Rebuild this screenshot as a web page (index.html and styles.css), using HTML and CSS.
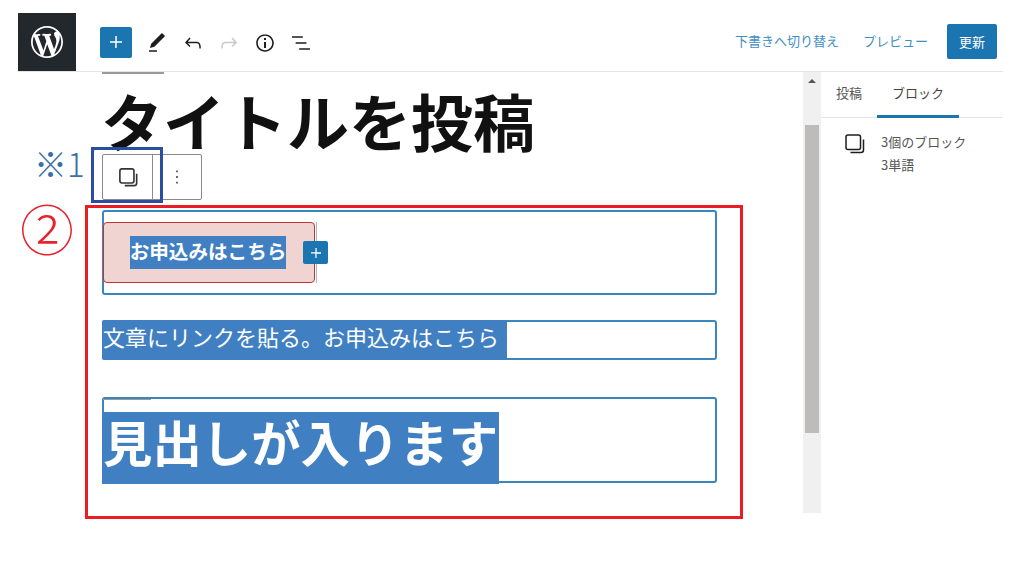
FILE: index.html
```html
<!DOCTYPE html>
<html lang="ja">
<head>
<meta charset="utf-8">
<title>タイトルを投稿</title>
<link rel="stylesheet" href="styles.css">
</head>
<body>
<div class="app">
  <header class="topbar">
    <div class="logo">
      <svg width="32" height="32" viewBox="0 0 20 20"><path fill="#fff" d="M20 10c0-5.51-4.49-10-10-10C4.48 0 0 4.49 0 10c0 5.52 4.48 10 10 10 5.51 0 10-4.48 10-10zM7.78 15.37L4.37 6.22c.55-.02 1.17-.08 1.17-.08.5-.06.44-1.13-.06-1.11 0 0-1.45.11-2.37.11-.18 0-.37 0-.58-.01C4.12 2.69 6.87 1.11 10 1.11c2.33 0 4.45.87 6.05 2.34-.68-.11-1.65.39-1.65 1.58 0 .74.45 1.36.9 2.1.35.61.55 1.36.55 2.46 0 1.49-1.4 5-1.4 5l-3.03-8.37c.54-.02.82-.17.82-.17.5-.05.44-1.25-.06-1.22 0 0-1.44.12-2.38.12-.87 0-2.33-.12-2.33-.12-.5-.03-.56 1.2-.06 1.22l.92.08 1.26 3.41zM17.41 10c.24-.64.74-1.87.43-4.25.7 1.29 1.05 2.71 1.05 4.25 0 3.29-1.73 6.24-4.4 7.78.97-2.59 1.94-5.2 2.92-7.78zM6.1 18.09C3.12 16.65 1.11 13.53 1.11 10c0-1.3.23-2.48.72-3.59C3.25 10.3 4.67 14.2 6.1 18.09zm4.03-6.63l2.58 6.98c-.86.29-1.76.45-2.71.45-.79 0-1.57-.11-2.29-.33.81-2.38 1.62-4.74 2.42-7.1z"/></svg>
    </div>
    <div class="tools">
      <span class="add">
        <svg width="24" height="24" viewBox="0 0 24 24"><path fill="#fff" d="M18 11.2h-5.2V6h-1.5v5.2H6v1.5h5.2V18h1.5v-5.2H18z"/></svg>
      </span>
      <span class="tool">
        <svg width="24" height="24" viewBox="0 0 24 24"><path d="M20.1 5.1L16.9 2 6.2 12.7l-1.3 4.4 4.5-1.3L20.1 5.1zM4 20.8h8v-1.5H4v1.5z"/></svg>
      </span>
      <span class="tool">
        <svg width="24" height="24" viewBox="0 0 24 24"><path d="M18.3 11.7c-.6-.6-1.4-.9-2.3-.9H6.7l2.9-3.3-1.1-1-4.5 5L8.5 16l1-1-2.7-2.7H16c.5 0 .9.2 1.3.5 1 1 1 3.4 1 4.5v.3h1.5v-.2c0-1.5 0-4.3-1.5-5.7z"/></svg>
      </span>
      <span class="tool tool-off">
        <svg width="24" height="24" viewBox="0 0 24 24"><path d="M15.6 6.5l-1.1 1 2.9 3.3H8c-.9 0-1.7.3-2.3.9-1.4 1.5-1.4 4.2-1.4 5.6v.2h1.5v-.3c0-1.1 0-3.5 1-4.5.3-.3.7-.5 1.3-.5h9.2L14.5 15l1.1 1.1 4.6-4.6-4.6-5z"/></svg>
      </span>
      <span class="tool">
        <svg width="24" height="24" viewBox="0 0 24 24"><path d="M12 3.2c-4.8 0-8.8 3.9-8.8 8.8 0 4.8 3.9 8.8 8.8 8.8 4.8 0 8.8-3.9 8.8-8.8 0-4.8-4-8.8-8.8-8.8zm0 16c-4 0-7.2-3.3-7.2-7.2C4.8 8 8 4.8 12 4.8s7.2 3.3 7.2 7.2c0 4-3.2 7.2-7.2 7.2zM11 17h2v-6h-2v6zm0-8h2V7h-2v2z"/></svg>
      </span>
      <span class="tool">
        <svg width="24" height="24" viewBox="0 0 24 24"><path d="M13.8 5.2H3v1.5h10.8V5.2zm-3.6 12v1.5H21v-1.5H10.2zm7.2-6H6.6v1.5h10.8v-1.5z"/></svg>
      </span>
    </div>
    <div class="actions">
      <a class="link">下書きへ切り替え</a>
      <a class="link">プレビュー</a>
      <span class="update">更新</span>
    </div>
  </header>

  <div class="workspace">
    <main class="editor">
      <div class="tab-mark"></div>
      <h1 class="post-title">タイトルを投稿</h1>
      <div class="block-toolbar">
        <span class="bt-stack">
          <svg width="26" height="26" viewBox="0 0 24 24" fill="none" stroke="#333" stroke-width="1.5"><rect x="4.5" y="4.5" width="13" height="13" rx="2"/><path d="M20 9v8.5a2.5 2.5 0 0 1-2.5 2.5H9"/></svg>
        </span>
        <span class="bt-more">
          <svg width="24" height="24" viewBox="0 0 24 24"><path fill="#444" d="M12.8 18.5h-1.6v-1.8h1.6v1.8zm0-5.6h-1.6v-1.8h1.6v1.8zm0-5.6h-1.6V5.5h1.6v1.8z"/></svg>
        </span>
      </div>

      <section class="block block-button">
        <div class="wp-button"><span class="sel sel-button">お申込みはこちら</span></div>
        <span class="caret"></span>
        <span class="inserter">
          <svg width="20" height="20" viewBox="0 0 24 24"><path fill="#fff" d="M18 11.2h-5.2V6h-1.5v5.2H6v1.5h5.2V18h1.5v-5.2H18z"/></svg>
        </span>
      </section>

      <section class="block block-para">
        <span class="sel sel-para">文章にリンクを貼る。お申込みはこちら</span>
      </section>

      <section class="block block-heading">
        <div class="heading-mark"></div>
        <span class="sel sel-heading">見出しが入ります</span>
      </section>
    </main>

    <div class="scrollbar">
      <div class="scroll-up"></div>
      <div class="scroll-thumb"></div>
    </div>

    <aside class="sidebar">
      <nav class="tabs">
        <span class="tab">投稿</span>
        <span class="tab tab-active">ブロック</span>
      </nav>
      <div class="summary">
        <svg class="summary-icon" width="24" height="24" viewBox="0 0 24 24" fill="none" stroke="#1e1e1e" stroke-width="1.5"><rect x="3" y="3" width="14.5" height="14.5" rx="2"/><path d="M20.5 7.5v10.5a2.5 2.5 0 0 1-2.5 2.5H7.5"/></svg>
        <div class="summary-text">
          <p>3個のブロック</p>
          <p>3単語</p>
        </div>
      </div>
    </aside>
  </div>

  <div class="note-mark">※1</div>
  <div class="note-box"></div>
  <div class="num-mark">②</div>
  <div class="red-box"></div>
</div>
</body>
</html>
```

FILE: styles.css
```css
* { box-sizing: border-box; }
html, body { margin: 0; padding: 0; background: #fff; }
body {
  font-family: "Noto Sans CJK JP", "Noto Sans", sans-serif;
  color: #1e1e1e;
  overflow: hidden;
}
.app { position: relative; width: 1024px; height: 563px; padding: 13px 21px 0 18px; }

.topbar { display: flex; align-items: stretch; height: 59px; border-bottom: 1px solid #e4e4e4; }
.logo { width: 58px; height: 58px; background: #23282d; display: flex; align-items: center; justify-content: center; }
.tools { display: flex; align-items: center; padding-left: 24px; padding-top: 1px; }
.add { width: 32px; height: 31px; margin-top: -1px; background: #1a75b0; border-radius: 2px; display: flex; align-items: center; justify-content: center; margin-right: 7px; }
.tool { width: 36px; height: 36px; display: flex; align-items: center; justify-content: center; }
.tool svg { fill: #1e1e1e; }
.tool-off svg { fill: #c9c9c9; }
.actions { margin-left: auto; display: flex; align-items: center; gap: 24px; padding: 0 6px 2px 0; }
.link { font-size: 13px; color: #3f8fc2; line-height: 20px; }
.update { width: 50px; height: 35px; margin-left: -5px; background: #1a75b0; color: #fff; font-size: 13px; border-radius: 2px; display: flex; align-items: center; justify-content: center; }

.workspace { display: flex; height: 441px; }
.editor { width: 785px; padding-left: 84px; }
.tab-mark { width: 62px; height: 2px; background: #9a9a9a; }
.post-title { margin: 0 0 0 -1px; height: 80px; font-size: 62px; line-height: 93px; font-weight: 700; color: #111; white-space: nowrap; }
.block-toolbar { display: flex; width: 100px; height: 46px; border: 1px solid #8a8a8a; border-radius: 2px; background: #fff; }
.bt-stack { width: 50px; border-right: 1px solid #8a8a8a; display: flex; align-items: center; justify-content: center; }
.bt-more { flex: 1; display: flex; align-items: center; justify-content: center; }

.block { position: relative; width: 615px; border: 2px solid #3a86bd; border-radius: 3px; }
.sel { background: #4080c2; color: #fff; }

.block-button { height: 85px; margin-top: 10px; padding-top: 10px; }
.wp-button { width: 212px; height: 61px; margin-left: -1px; background: #f0d4d2; border: 1.5px solid #c0352f; border-radius: 4px; display: flex; align-items: center; justify-content: center; padding-right: 2px; }
.sel-button { font-size: 19.6px; font-weight: 700; line-height: 29px; height: 33px; white-space: nowrap; }
.caret { position: absolute; left: 212px; top: 10px; width: 1px; height: 61px; background: #9fbfd8; }
.inserter { position: absolute; left: 199px; top: 29px; width: 25px; height: 23px; background: #1a75b0; border-radius: 2px; display: flex; align-items: center; justify-content: center; }

.block-para { height: 40px; margin-top: 25px; }
.sel-para { display: block; width: 405px; height: 40px; margin: -2px 0 0 -2px; padding-left: 1px; font-size: 22px; line-height: 33px; white-space: nowrap; border-radius: 2px; }

.block-heading { height: 86px; margin-top: 37px; }
.heading-mark { width: 48px; height: 1px; background: #9a9a9a; margin-left: -1px; }
.sel-heading { display: block; width: 397px; height: 72px; margin: 12px 0 0 -2px; padding-left: 1px; font-size: 49.4px; font-weight: 700; line-height: 58px; white-space: nowrap; }

.scrollbar { width: 18px; background: #f0f0f0; padding: 0 2px; position: relative; }
.scroll-up { width: 0; height: 0; margin: 7px auto 0; border: 4px solid transparent; border-top: 0; border-bottom: 4px solid #555; }
.scroll-thumb { height: 308px; margin-top: 42px; background: #bdbcba; }

.sidebar { width: 182px; }
.tabs { display: flex; height: 46px; border-bottom: 1px solid #e4e4e4; padding-left: 15px; gap: 30px; }
.tab { position: relative; font-size: 13px; line-height: 42px; color: #555; white-space: nowrap; }
.tab-active::after { content: ""; position: absolute; left: -15px; right: -15px; bottom: -1px; height: 3px; background: #1a75b0; }
.tab-active { color: #444; }
.summary { display: flex; padding: 14px 0 0 22px; }
.summary-icon { flex: none; margin-right: 14px; }
.summary-text { font-size: 13px; color: #555; line-height: 23px; margin-top: -2px; }
.summary-text p { margin: 0; white-space: nowrap; }

.note-mark { position: absolute; left: 34px; top: 141px; font-size: 33px; line-height: 44px; color: #3a6fa8; font-weight: 300; white-space: nowrap; }
.note-box { position: absolute; left: 91px; top: 147px; width: 72px; height: 56px; border: 3px solid #2a4ea0; }
.num-mark { position: absolute; left: 20px; top: 190px; width: 54px; font-size: 54px; line-height: 76px; color: #e8212a; font-weight: 300; }
.red-box { position: absolute; left: 85px; top: 205px; width: 658px; height: 314px; border: 3px solid #ec1c24; }
```
